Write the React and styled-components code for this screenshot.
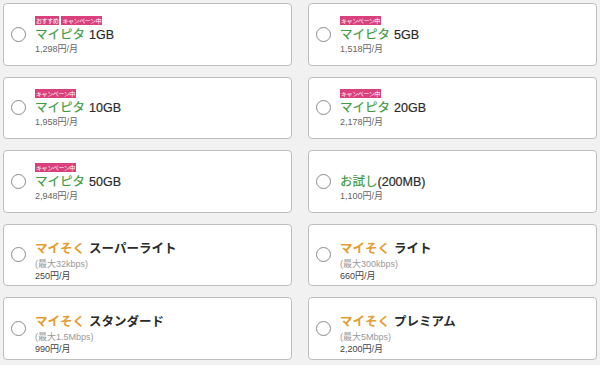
import React from 'react';
import styled, { createGlobalStyle } from 'styled-components';

const GlobalStyle = createGlobalStyle`
  html, body {
    margin: 0;
    padding: 0;
    background: #f1f1f1;
  }
  body {
    font-family: "Liberation Sans", "Noto Sans CJK JP", sans-serif;
    color: #333;
  }
`;

const Grid = styled.div`
  display: grid;
  grid-template-columns: 289px 289px;
  grid-auto-rows: 62.5px;
  column-gap: 16px;
  row-gap: 11px;
  padding: 3px 0 0 3px;
`;

const Card = styled.label`
  display: flex;
  align-items: center;
  gap: 9px;
  padding: 2px 0 0 7px;
  background: #fff;
  border: 1px solid #bdbdbd;
  border-radius: 4px;
  box-sizing: border-box;
`;

const Radio = styled.span`
  flex: none;
  width: 15px;
  height: 15px;
  margin-top: -2px;
  border: 1px solid #8a8a8a;
  border-radius: 50%;
  box-sizing: border-box;
  background: #fff;
`;

const Body = styled.div`
  display: flex;
  flex-direction: column;
`;

const Badges = styled.div`
  display: flex;
  gap: 2px;
  height: 9px;
  margin-bottom: 3px;
`;

const Badge = styled.span`
  display: inline-block;
  background: #d9407c;
  color: #fff;
  font-family: "Noto Sans CJK JP", sans-serif;
  font-size: 6px;
  line-height: 9px;
  height: 9px;
  padding: 0 1px;
  letter-spacing: -0.4px;
  white-space: nowrap;
`;

const Title = styled.div`
  font-size: 12.5px;
  line-height: 12px;
  font-weight: ${({ $bold }) => ($bold ? 700 : 400)};
  -webkit-text-stroke: ${({ $bold }) => ($bold ? '0' : '0.2px')};
  color: #2b2b2b;
  white-space: nowrap;
`;

const Brand = styled.span`
  font-family: "Noto Sans CJK JP", sans-serif;
  color: ${({ $tone }) => ($tone === 'orange' ? '#e79c32' : '#3f9c44')};
  margin-right: ${({ $space }) => ($space ? '4px' : '0')};
`;

const Note = styled.div`
  font-size: 9px;
  line-height: 12px;
  color: #999;
  margin-top: 3px;
`;

const Price = styled.div`
  font-size: 9px;
  line-height: 12px;
  color: ${({ $dark }) => ($dark ? '#444' : '#666')};
  margin-top: ${({ $gap }) => $gap}px;
`;

const plans = [
  { brand: 'マイピタ', name: '1GB', price: '1,298円/月', badges: ['おすすめ', 'キャンペーン中'] },
  { brand: 'マイピタ', name: '5GB', price: '1,518円/月', badges: ['キャンペーン中'] },
  { brand: 'マイピタ', name: '10GB', price: '1,958円/月', badges: ['キャンペーン中'] },
  { brand: 'マイピタ', name: '20GB', price: '2,178円/月', badges: ['キャンペーン中'] },
  { brand: 'マイピタ', name: '50GB', price: '2,948円/月', badges: ['キャンペーン中'] },
  { brand: 'お試し', name: '(200MB)', price: '1,100円/月', tight: true },
  { brand: 'マイそく', name: 'スーパーライト', note: '(最大32kbps)', price: '250円/月', tone: 'orange' },
  { brand: 'マイそく', name: 'ライト', note: '(最大300kbps)', price: '660円/月', tone: 'orange' },
  { brand: 'マイそく', name: 'スタンダード', note: '(最大1.5Mbps)', price: '990円/月', tone: 'orange' },
  { brand: 'マイそく', name: 'プレミアム', note: '(最大5Mbps)', price: '2,200円/月', tone: 'orange' },
];

function PlanCard({ plan }) {
  const orange = plan.tone === 'orange';
  return (
    <Card>
      <Radio />
      <Body>
        <Badges>
          {plan.badges?.map((b) => (
            <Badge key={b}>{b}</Badge>
          ))}
        </Badges>
        <Title $bold={orange}>
          <Brand $tone={plan.tone} $space={!plan.tight}>{plan.brand}</Brand>
          {plan.name}
        </Title>
        {plan.note && <Note>{plan.note}</Note>}
        <Price $dark={orange} $gap={orange ? 0 : 2}>{plan.price}</Price>
      </Body>
    </Card>
  );
}

export default function App() {
  return (
    <>
      <GlobalStyle />
      <Grid>
        {plans.map((p) => (
          <PlanCard key={p.brand + p.name} plan={p} />
        ))}
      </Grid>
    </>
  );
}
